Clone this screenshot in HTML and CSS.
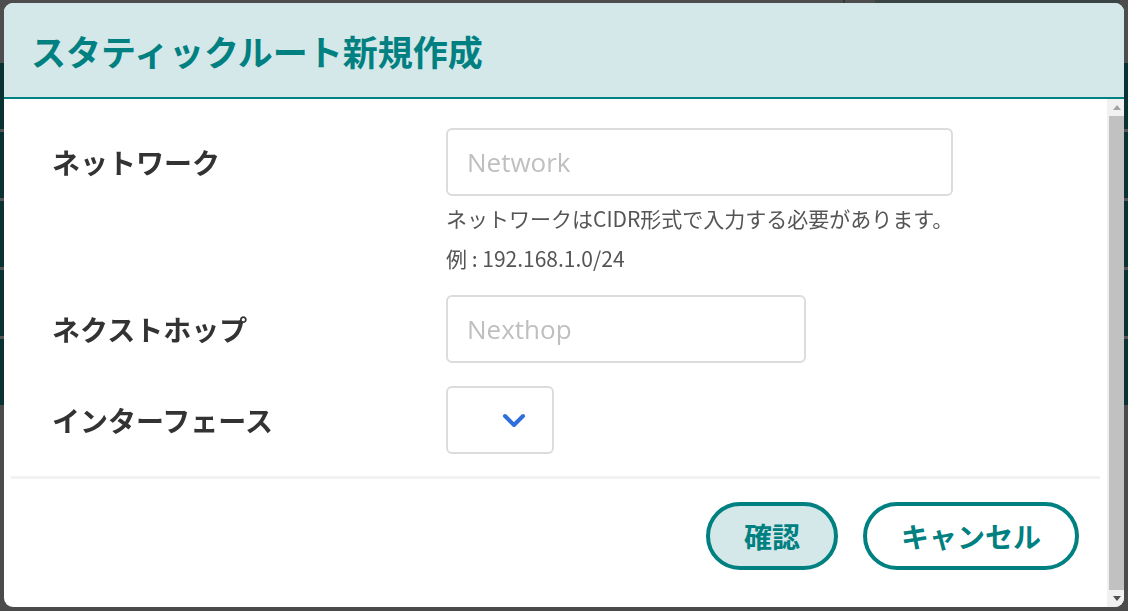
FILE: index.html
```html
<!DOCTYPE html>
<html lang="ja">
<head>
<meta charset="utf-8">
<title>スタティックルート新規作成</title>
<link rel="stylesheet" href="styles.css">
</head>
<body>
<div class="page">
  <div class="topbar">
    <div class="account"><span class="account-bar"></span></div>
  </div>
  <div class="list">
    <div class="list-row"></div>
    <div class="list-row"></div>
    <div class="list-row"></div>
    <div class="list-row"></div>
    <div class="list-row"></div>
  </div>
</div>

<div class="overlay">
  <div class="modal">
    <div class="modal-header">
      <h1 class="modal-title">スタティックルート新規作成</h1>
    </div>
    <div class="modal-body">
      <div class="modal-content">
        <div class="form">
          <div class="form-row">
            <div class="form-label">ネットワーク</div>
            <div class="form-field">
              <input class="text-input wide" type="text" placeholder="Network">
              <p class="help">ネットワークはCIDR形式で入力する必要があります。</p>
              <p class="help">例 : 192.168.1.0/24</p>
            </div>
          </div>
          <div class="form-row row-nexthop">
            <div class="form-label">ネクストホップ</div>
            <div class="form-field">
              <input class="text-input medium" type="text" placeholder="Nexthop">
            </div>
          </div>
          <div class="form-row row-iface">
            <div class="form-label">インターフェース</div>
            <div class="form-field">
              <div class="select">
                <svg class="chevron" width="24" height="16" viewBox="0 0 24 16">
                  <path d="M3 3 L12 12 L21 3" fill="none" stroke="#2f6fdc" stroke-width="4" stroke-linecap="round" stroke-linejoin="round"/>
                </svg>
              </div>
            </div>
          </div>
        </div>
        <div class="divider"></div>
        <div class="footer">
          <button class="btn btn-primary">確認</button>
          <button class="btn btn-secondary">キャンセル</button>
        </div>
      </div>
      <div class="scrollbar">
        <div class="sb-arrow">
          <svg width="8" height="5" viewBox="0 0 8 5"><path d="M0 5 L4 0 L8 5 Z" fill="#a3a3a3"/></svg>
        </div>
        <div class="sb-thumb"></div>
        <div class="sb-arrow">
          <svg width="8" height="5" viewBox="0 0 8 5"><path d="M0 0 L4 5 L8 0 Z" fill="#505050"/></svg>
        </div>
      </div>
    </div>
  </div>
</div>
</body>
</html>
```

FILE: styles.css
```css
* { box-sizing: border-box; }

html, body {
  margin: 0;
  padding: 0;
  height: 100%;
}

body {
  background: #4b4b4b;
  font-family: "Noto Sans CJK JP", "Open Sans", sans-serif;
  overflow: hidden;
}

/* underlying page (dimmed) */
.page {
  display: flex;
  flex-direction: column;
  height: 100%;
}

.topbar {
  height: 63px;
  display: flex;
  justify-content: flex-end;
  background: #4d4d4d;
}

.account {
  width: 285px;
  border-left: 2px solid #2f3a3a;
  padding: 0 8px 0 30px;
}

.account-bar {
  display: block;
  height: 3px;
  background: #3a4444;
}

.list {
  display: flex;
  flex-direction: column;
  gap: 3px;
  background: #555;
}

.list-row {
  height: 66px;
  background: #0a3233;
}

/* overlay + modal */
.overlay {
  position: fixed;
  inset: 0;
  padding: 3px 4px 4px 4px;
  display: flex;
}

.modal {
  flex: 1;
  display: flex;
  flex-direction: column;
  background: #fff;
  border-radius: 9px;
  overflow: hidden;
}

.modal-header {
  height: 96px;
  flex: none;
  background: #d4e7e9;
  border-bottom: 2px solid #008080;
  display: flex;
  align-items: center;
  padding-left: 27px;
}

.modal-title {
  margin: 0;
  font-size: 35px;
  font-weight: 700;
  color: #008080;
  letter-spacing: 0;
}

.modal-body {
  flex: 1;
  display: flex;
  min-height: 0;
}

.modal-content {
  flex: 1;
  padding-top: 29px;
  overflow: hidden;
}

.form {
  padding-left: 48px;
}

.form-row {
  display: grid;
  grid-template-columns: 394px 1fr;
}

.form-label {
  height: 68px;
  display: flex;
  align-items: center;
  font-size: 28px;
  font-weight: 700;
  color: #333;
}

.form-field {
  display: flex;
  flex-direction: column;
  align-items: flex-start;
}

.text-input {
  height: 68px;
  border: 2px solid #dcdcdc;
  border-radius: 6px;
  padding: 0 0 0 19px;
  font-family: "Open Sans", "Noto Sans CJK JP", sans-serif;
  font-size: 26px;
  color: #333;
  outline: none;
  background: #fff;
}

.text-input::placeholder {
  color: #bfbfbf;
}

.text-input.wide { width: 507px; }
.text-input.medium { width: 360px; }

.help {
  margin: 0;
  font-size: 21px;
  line-height: 40px;
  color: #555;
}

.help:first-of-type { margin-top: 2px; }

.row-nexthop { margin-top: 17px; }
.row-iface { margin-top: 23px; }

.select {
  width: 108px;
  height: 68px;
  border: 2px solid #dcdcdc;
  border-radius: 6px;
  display: flex;
  align-items: center;
  justify-content: flex-end;
  padding-right: 26px;
}

.chevron { display: block; margin-top: 2px; }

.divider {
  margin: 22px 7px 0 7px;
  height: 3px;
  background: #f2f2f2;
}

.footer {
  margin-top: 23px;
  display: flex;
  justify-content: flex-end;
  gap: 25px;
  padding-right: 28px;
}

.btn {
  height: 68px;
  border: 4px solid #008080;
  border-radius: 34px;
  padding: 0 34px;
  font-family: "Noto Sans CJK JP", sans-serif;
  font-size: 28px;
  font-weight: 700;
  color: #008080;
  background: #fff;
  cursor: pointer;
}

.btn-primary { background: #d4e7e9; }

/* fake scrollbar */
.scrollbar {
  width: 17px;
  flex: none;
  background: #f1f1f1;
  display: flex;
  flex-direction: column;
  padding: 0 0 0 2px;
}

.sb-arrow {
  height: 17px;
  display: flex;
  align-items: center;
  justify-content: center;
}

.sb-thumb {
  flex: 1;
  background: #c1c1c1;
}
```
